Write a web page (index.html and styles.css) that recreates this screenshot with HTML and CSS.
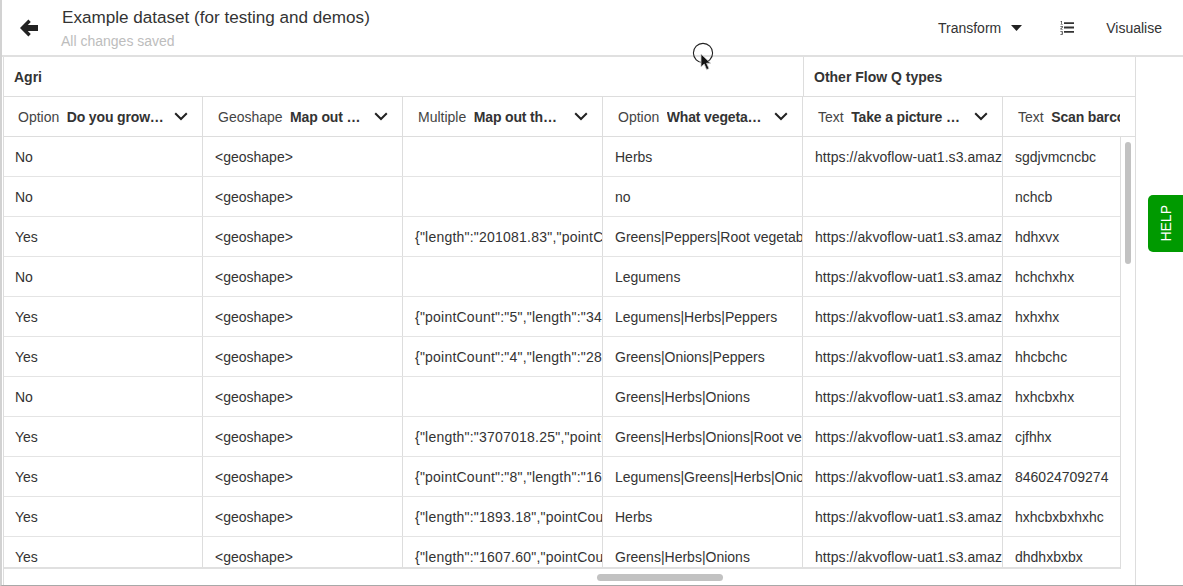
FILE: index.html
```html
<!DOCTYPE html>
<html lang="en">
<head>
<meta charset="utf-8">
<title>Example dataset</title>
<link rel="stylesheet" href="styles.css">
</head>
<body>
<div class="app">
  <header class="topbar">
    <a class="back" aria-label="Back">
      <svg width="18" height="18" viewBox="0 0 18 18"><path d="M8.4 0.6 L0 9 L8.4 17.4 L10.8 15 L7.8 11.9 H18 V6.1 H7.8 L10.8 3 Z" fill="#222"/></svg>
    </a>
    <div class="titles">
      <div class="title">Example dataset (for testing and demos)</div>
      <div class="saved">All changes saved</div>
    </div>
    <nav class="actions">
      <span class="action transform">Transform <svg class="caret" width="11" height="6" viewBox="0 0 11 6"><path d="M0 0H11L5.5 6Z" fill="#222"/></svg></span>
      <svg class="list" width="14" height="14" viewBox="0 0 14 14" aria-label="Order"><path d="M4 1.2H14V3H4ZM4 5.6H14V7.4H4ZM4 10H14V11.8H4Z" fill="#333"/><path d="M.6 0H2V3H2.8V3.6H.6V3H1.3V.7H.6ZM.4 5H2.8V6.6L1.2 7.9H2.8V8.6H.4V7.5L2 6.2V5.7H.4ZM.4 10.2H2.8V13.8H.4V13.1H2V12.3H1V11.7H2V10.9H.4Z" fill="#444"/></svg>
      <span class="action">Visualise</span>
    </nav>
  </header>

  <main class="sheet">
    <div class="table-wrap">
      <div class="groups">
        <div class="group group-agri">Agri</div>
        <div class="group group-flow">Other Flow Q types</div>
      </div>
      <div class="columns">
        <div class="col-head"><span class="type">Option</span><b class="name">Do you grow…</b><svg class="chev" width="14" height="9" viewBox="0 0 14 9"><path d="M1.2 1.2L7 7L12.8 1.2" fill="none" stroke="#222" stroke-width="2"/></svg></div>
        <div class="col-head"><span class="type">Geoshape</span><b class="name">Map out …</b><svg class="chev" width="14" height="9" viewBox="0 0 14 9"><path d="M1.2 1.2L7 7L12.8 1.2" fill="none" stroke="#222" stroke-width="2"/></svg></div>
        <div class="col-head"><span class="type">Multiple</span><b class="name">Map out th…</b><svg class="chev" width="14" height="9" viewBox="0 0 14 9"><path d="M1.2 1.2L7 7L12.8 1.2" fill="none" stroke="#222" stroke-width="2"/></svg></div>
        <div class="col-head"><span class="type">Option</span><b class="name">What vegeta…</b><svg class="chev" width="14" height="9" viewBox="0 0 14 9"><path d="M1.2 1.2L7 7L12.8 1.2" fill="none" stroke="#222" stroke-width="2"/></svg></div>
        <div class="col-head"><span class="type">Text</span><b class="name">Take a picture …</b><svg class="chev" width="14" height="9" viewBox="0 0 14 9"><path d="M1.2 1.2L7 7L12.8 1.2" fill="none" stroke="#222" stroke-width="2"/></svg></div>
        <div class="col-head col-last"><span class="type">Text</span><b class="name name-clip">Scan barcode</b></div>
      </div>
      <div class="body-row">
        <div class="rows">
          <div class="row"><div class="cell">No</div><div class="cell">&lt;geoshape&gt;</div><div class="cell"></div><div class="cell">Herbs</div><div class="cell wide">https://akvoflow-uat1.s3.amazonaws.com/images/a.jpg</div><div class="cell">sgdjvmcncbc</div></div>
          <div class="row"><div class="cell">No</div><div class="cell">&lt;geoshape&gt;</div><div class="cell"></div><div class="cell">no</div><div class="cell"></div><div class="cell">nchcb</div></div>
          <div class="row"><div class="cell">Yes</div><div class="cell">&lt;geoshape&gt;</div><div class="cell json">{"length":"201081.83","pointCount":"5"}</div><div class="cell">Greens|Peppers|Root vegetables</div><div class="cell wide">https://akvoflow-uat1.s3.amazonaws.com/images/a.jpg</div><div class="cell">hdhxvx</div></div>
          <div class="row"><div class="cell">No</div><div class="cell">&lt;geoshape&gt;</div><div class="cell"></div><div class="cell">Legumens</div><div class="cell wide">https://akvoflow-uat1.s3.amazonaws.com/images/a.jpg</div><div class="cell">hchchxhx</div></div>
          <div class="row"><div class="cell">Yes</div><div class="cell">&lt;geoshape&gt;</div><div class="cell json">{"pointCount":"5","length":"3456"}</div><div class="cell">Legumens|Herbs|Peppers</div><div class="cell wide">https://akvoflow-uat1.s3.amazonaws.com/images/a.jpg</div><div class="cell">hxhxhx</div></div>
          <div class="row"><div class="cell">Yes</div><div class="cell">&lt;geoshape&gt;</div><div class="cell json">{"pointCount":"4","length":"2890"}</div><div class="cell">Greens|Onions|Peppers</div><div class="cell wide">https://akvoflow-uat1.s3.amazonaws.com/images/a.jpg</div><div class="cell">hhcbchc</div></div>
          <div class="row"><div class="cell">No</div><div class="cell">&lt;geoshape&gt;</div><div class="cell"></div><div class="cell">Greens|Herbs|Onions</div><div class="cell wide">https://akvoflow-uat1.s3.amazonaws.com/images/a.jpg</div><div class="cell">hxhcbxhx</div></div>
          <div class="row"><div class="cell">Yes</div><div class="cell">&lt;geoshape&gt;</div><div class="cell json">{"length":"3707018.25","pointCount":"6"}</div><div class="cell">Greens|Herbs|Onions|Root vegetables</div><div class="cell wide">https://akvoflow-uat1.s3.amazonaws.com/images/a.jpg</div><div class="cell">cjfhhx</div></div>
          <div class="row"><div class="cell">Yes</div><div class="cell">&lt;geoshape&gt;</div><div class="cell json">{"pointCount":"8","length":"1634"}</div><div class="cell">Legumens|Greens|Herbs|Onions</div><div class="cell wide">https://akvoflow-uat1.s3.amazonaws.com/images/a.jpg</div><div class="cell">846024709274</div></div>
          <div class="row"><div class="cell">Yes</div><div class="cell">&lt;geoshape&gt;</div><div class="cell json">{"length":"1893.18","pointCount":"4"}</div><div class="cell">Herbs</div><div class="cell wide">https://akvoflow-uat1.s3.amazonaws.com/images/a.jpg</div><div class="cell">hxhcbxbxhxhc</div></div>
          <div class="row"><div class="cell">Yes</div><div class="cell">&lt;geoshape&gt;</div><div class="cell json">{"length":"1607.60","pointCount":"4"}</div><div class="cell">Greens|Herbs|Onions</div><div class="cell wide">https://akvoflow-uat1.s3.amazonaws.com/images/a.jpg</div><div class="cell">dhdhxbxbx</div></div>
        </div>
        <div class="vscroll"><div class="vthumb"></div></div>
      </div>
      <div class="hscroll"><div class="hthumb"></div></div>
    </div>
  </main>

  <div class="help">HELP</div>

  <div class="pointer">
    <svg width="26" height="32" viewBox="0 0 26 32">
      <circle cx="12" cy="11" r="9.6" fill="none" stroke="#222" stroke-width="1.1"/>
      <path d="M10 12V25L13.2 22L15.6 27.6L18 26.6L15.6 21.2H19.6Z" fill="#111" stroke="#ccc" stroke-width=".8"/>
    </svg>
  </div>
</div>
</body>
</html>
```
FILE: styles.css
```css
* { box-sizing: border-box; }
html, body { margin: 0; padding: 0; }
body {
  font-family: "Liberation Sans", Arial, sans-serif;
  font-size: 14px;
  color: #333;
  background: #fff;
  overflow: hidden;
}
.app {
  position: relative;
  width: 1183px;
  height: 586px;
  display: flex;
  flex-direction: column;
  overflow: hidden;
  border-left: 2px solid #d2d2d2;
  border-bottom: 1px solid #a8a8a8;
}
.topbar {
  flex: 0 0 57px;
  display: flex;
  align-items: flex-start;
  border-bottom: 2px solid #e0e0e0;
}
.back { margin: 19px 0 0 18px; width: 18px; height: 18px; display: block; }
.back svg { display: block; }
.titles { margin-left: 24px; }
.title { font-size: 17.1px; color: #333; line-height: 20px; margin-top: 8px; }
.saved { font-size: 14px; color: #bdbdbd; line-height: 18px; margin-top: 4px; margin-left: -1px; }
.actions {
  margin-left: auto;
  display: flex;
  align-items: center;
  height: 55px;
  padding-top: 1px;
  padding-right: 21px;
  color: #333;
}
.transform { display: flex; align-items: center; }
.caret { margin-left: 10px; }
.list { margin-left: 38px; margin-right: 32px; }
.sheet { flex: 1; min-height: 0; display: flex; padding-left: 1px; }
.table-wrap {
  width: 1133px;
  border-left: 1px solid #ddd;
  border-right: 1px solid #ddd;
  display: flex;
  flex-direction: column;
  overflow: hidden;
}
.groups { flex: 0 0 40px; display: flex; border-bottom: 1px solid #ddd; }
.group {
  font-weight: 700;
  font-size: 14px;
  color: #333;
  display: flex;
  align-items: center;
  padding-left: 10px;
  border-right: 1px solid #ddd;
}
.group-agri { width: 800px; }
.group-flow { flex: 1; border-right: 0; }
.columns { flex: 0 0 40px; display: flex; border-bottom: 1px solid #ddd; }
.col-head {
  flex: 0 0 200px;
  display: flex;
  align-items: center;
  padding: 0 14px 0 15px;
  border-right: 1px solid #ddd;
  white-space: nowrap;
  overflow: hidden;
}
.col-head:first-child { flex-basis: 199px; padding-left: 14px; }
.col-last { flex: 1 1 0; border-right: 0; padding-right: 15px; min-width: 0; }
.type { margin-right: 7.5px; color: #444; }
.name { font-weight: 700; color: #333; flex: 1; overflow: hidden; font-size: 14px; letter-spacing: -0.15px; }
.name-clip { overflow: hidden; }
.chev { flex: none; margin-left: 6px; }
.body-row { flex: 1; min-height: 0; display: flex; }
.rows { width: 1116px; overflow: hidden; border-bottom: 2px solid #e0e0e0; }
.row { display: flex; height: 40px; border-bottom: 1px solid #e4e4e4; }
.cell {
  flex: 0 0 200px;
  display: flex;
  align-items: center;
  padding-left: 12px;
  border-right: 1px solid #ddd;
  white-space: nowrap;
  overflow: hidden;
  color: #333;
}
.cell:first-child { flex-basis: 199px; padding-left: 11px; }
.cell:last-child { flex: 1 1 0; min-width: 0; border-right: 0; }
.cell.json { letter-spacing: .22px; }
.cell.wide { letter-spacing: .06px; }
.vscroll { flex: 1; border-left: 1px solid #ddd; padding: 5px 3px 0 4px; }
.vthumb { height: 122px; background: #c2c2c2; border-radius: 3px; width: 6px; }
.hscroll { flex: 0 0 16px; padding: 5px 0 0 593px; }
.hthumb { width: 126px; height: 7px; background: #c2c2c2; border-radius: 4px; }
.help {
  position: absolute;
  left: 1146px;
  top: 195px;
  width: 35px;
  height: 57px;
  background: #009a00;
  color: #fff;
  border-radius: 5px 0 0 5px;
  display: flex;
  align-items: center;
  justify-content: center;
  font-size: 14px;
  writing-mode: sideways-lr;
}
.pointer { position: absolute; left: 689px; top: 42px; width: 26px; height: 32px; }
```
